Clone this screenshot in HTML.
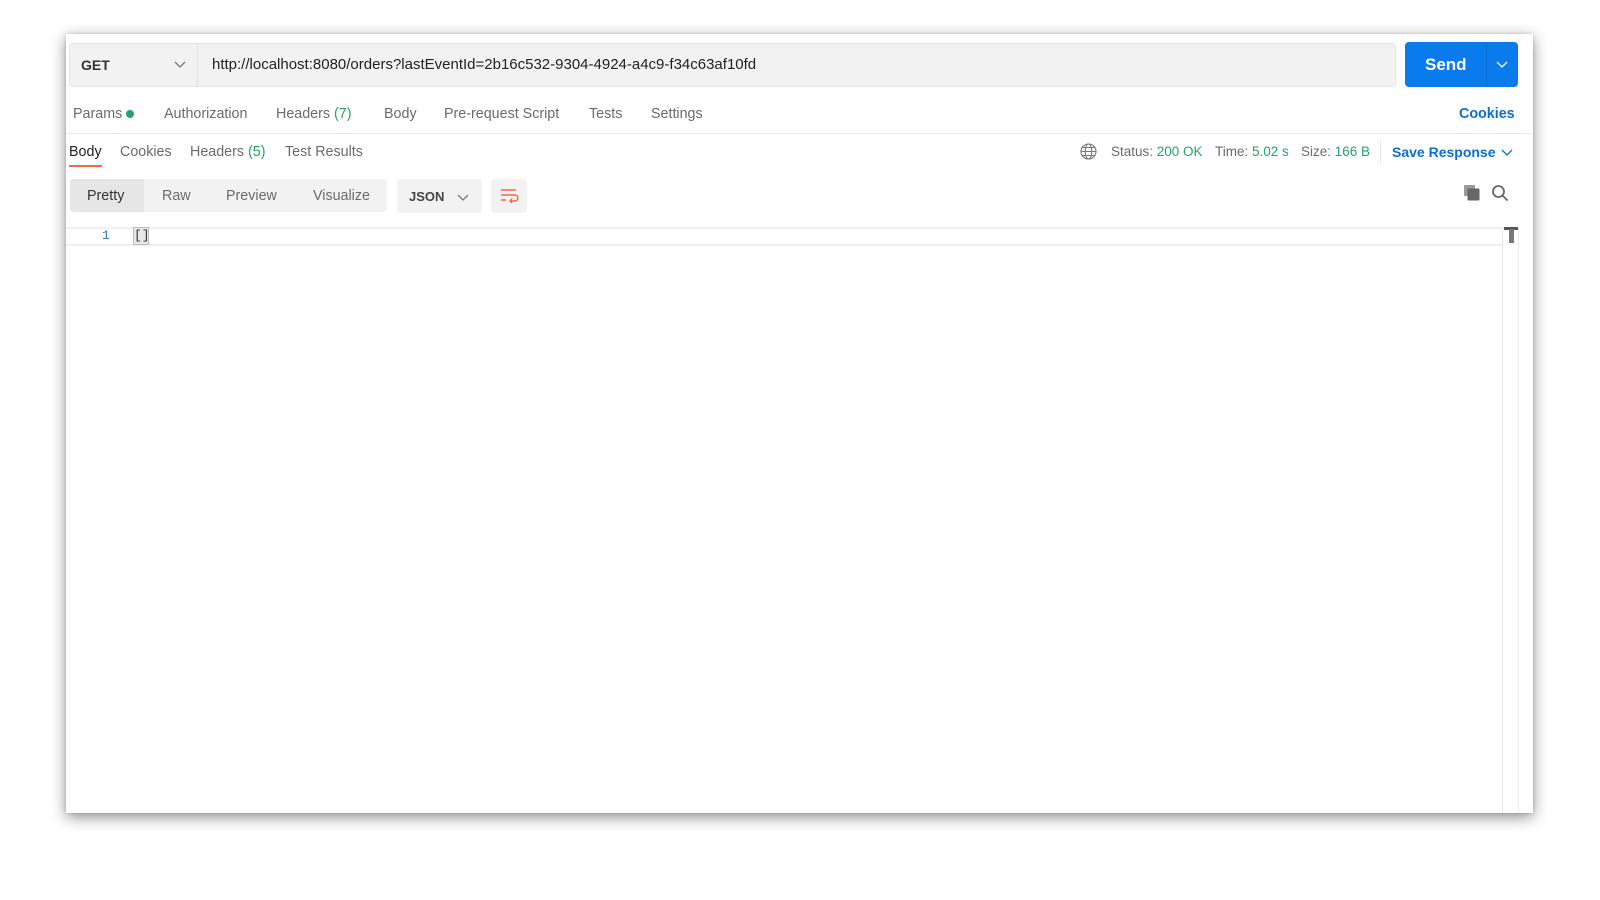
<!DOCTYPE html>
<html><head><meta charset="utf-8"><style>
*{box-sizing:border-box;margin:0;padding:0}
body{width:1600px;height:900px;background:#fff;font-family:"Liberation Sans",sans-serif;position:relative;overflow:hidden;color:#212121}
.win{position:absolute;left:66px;top:34px;width:1467px;height:779px;background:#fff;box-shadow:0 4px 14px rgba(0,0,0,.45),0 0 3px rgba(0,0,0,.15)}
.a{position:absolute;white-space:nowrap}
.g{color:#26a269}
.t{font-size:14.3px;color:#6b6b6b}
</style></head><body>
<div class="win">
 <div class="a" style="left:3px;top:9px;width:1327px;height:44px;background:#f2f2f2;border:1px solid #e4e4e4;border-radius:4px"></div>
 <div class="a" style="left:131px;top:9px;width:1px;height:44px;background:#e0e0e0"></div>
 <div class="a" style="left:15px;top:23px;font-size:14px;font-weight:bold;color:#333">GET</div>
 <svg class="a" style="left:108px;top:25px" width="12" height="10"><path d="M1 3l5 5 5-5" stroke="#777" fill="none" stroke-width="1.3"/></svg>
 <div class="a" style="left:146px;top:22px;font-size:15px;color:#222">http://localhost:8080/orders?lastEventId=2b16c532-9304-4924-a4c9-f34c63af10fd</div>
 <div class="a" style="left:1339px;top:8px;width:113px;height:45px;background:#097bed;border-radius:4px"></div>
 <div class="a" style="left:1420px;top:8px;width:1px;height:45px;background:#0a6fd6"></div>
 <div class="a" style="left:1359px;top:21px;font-size:17px;font-weight:bold;color:#fff">Send</div>
 <svg class="a" style="left:1430px;top:25px" width="12" height="10"><path d="M1 3l5 5 5-5" stroke="#fff" fill="none" stroke-width="1.3"/></svg>

 <div class="a t" style="left:7px;top:72px">Params</div>
 <div class="a" style="left:60px;top:76px;width:8px;height:8px;border-radius:50%;background:#26a269"></div>
 <div class="a t" style="left:98px;top:72px">Authorization</div>
 <div class="a t" style="left:210px;top:72px">Headers <span class="g">(7)</span></div>
 <div class="a t" style="left:318px;top:72px">Body</div>
 <div class="a t" style="left:378px;top:72px">Pre-request Script</div>
 <div class="a t" style="left:523px;top:72px">Tests</div>
 <div class="a t" style="left:585px;top:72px">Settings</div>
 <div class="a" style="left:1393px;top:72px;font-size:14.3px;font-weight:bold;color:#0b6fd0">Cookies</div>
 <div class="a" style="left:0;top:99px;width:1467px;height:1px;background:#ebebeb"></div>

 <div class="a" style="left:3px;top:110px;font-size:14.3px;color:#222">Body</div>
 <div class="a" style="left:3px;top:131px;width:33px;height:2px;background:#f26b3a"></div>
 <div class="a t" style="left:54px;top:110px">Cookies</div>
 <div class="a t" style="left:124px;top:110px">Headers <span class="g">(5)</span></div>
 <div class="a t" style="left:219px;top:110px">Test Results</div>
 <svg class="a" style="left:1014px;top:109px" width="17" height="17" fill="none" stroke="#777" stroke-width="1.1"><circle cx="8.5" cy="8.5" r="7.5"/><ellipse cx="8.5" cy="8.5" rx="3.3" ry="7.5"/><path d="M1 8.5h15M2.5 4.5h12M2.5 12.5h12"/></svg>
 <div class="a t" style="left:1045px;top:110px;font-size:13.5px">Status: <span class="g">200 OK</span></div>
 <div class="a t" style="left:1149px;top:110px;font-size:13.5px">Time: <span class="g">5.02 s</span></div>
 <div class="a t" style="left:1235px;top:110px;font-size:13.5px">Size: <span class="g">166 B</span></div>
 <div class="a" style="left:1314px;top:106px;width:1px;height:24px;background:#e6e6e6"></div>
 <div class="a" style="left:1326px;top:110px;font-size:14px;font-weight:bold;color:#0b6fd0">Save Response</div>
 <svg class="a" style="left:1435px;top:113px" width="12" height="10"><path d="M1 3l5 5 5-5" stroke="#0b6fd0" fill="none" stroke-width="1.3"/></svg>

 <div class="a" style="left:4px;top:145px;width:317px;height:33px;background:#f2f2f2;border-radius:4px"></div>
 <div class="a" style="left:4px;top:145px;width:74px;height:33px;background:#e6e6e6;border-radius:4px 0 0 4px"></div>
 <div class="a" style="left:21px;top:154px;font-size:14.3px;color:#333">Pretty</div>
 <div class="a t" style="left:96px;top:154px">Raw</div>
 <div class="a t" style="left:160px;top:154px">Preview</div>
 <div class="a t" style="left:247px;top:154px">Visualize</div>
 <div class="a" style="left:331px;top:145px;width:85px;height:34px;background:#f2f2f2;border-radius:4px"></div>
 <div class="a" style="left:343px;top:155px;font-size:13px;font-weight:bold;color:#444">JSON</div>
 <svg class="a" style="left:391px;top:158px" width="12" height="10"><path d="M1 3l5 5 5-5" stroke="#777" fill="none" stroke-width="1.3"/></svg>
 <div class="a" style="left:425px;top:145px;width:36px;height:34px;background:#f2f2f2;border-radius:4px"></div>
 <svg class="a" style="left:433px;top:153px" width="20" height="18" fill="none" stroke="#f26b3a" stroke-width="1.4"><path d="M2 3h15M2 8h14a3 3 0 0 1 0 6h-5M13 11.5l-2 2.5 2 2M2 13h5"/></svg>
 <svg class="a" style="left:1397px;top:150px" width="18" height="18"><rect x="1" y="1" width="11" height="11" rx="1" fill="#999"/><rect x="4.5" y="4.5" width="12" height="12" rx="1" fill="#666"/></svg>
 <svg class="a" style="left:1425px;top:150px" width="18" height="18" fill="none" stroke="#666" stroke-width="1.8"><circle cx="7.5" cy="7.5" r="5.5"/><path d="M11.5 11.5l5 5"/></svg>

 <div class="a" style="left:0;top:193px;width:1436px;height:19px;border-top:2px solid #f0f0f0;border-bottom:2px solid #f0f0f0"></div>
 <div class="a" style="left:36px;top:194px;font-size:13px;color:#2d7bb0;font-family:'Liberation Mono',monospace">1</div>
 <div class="a" style="left:67px;top:193px;width:16px;height:18px;background:#e8e8e8;border:1px solid #bbb;font-size:13px;font-family:'Liberation Mono',monospace;text-align:center;line-height:16px;color:#333">[]</div>
 <div class="a" style="left:1436px;top:193px;width:1px;height:586px;background:#e6e6e6"></div>
 <div class="a" style="left:1452px;top:193px;width:1px;height:586px;background:#ececec"></div>
 <div class="a" style="left:1438px;top:193px;width:14px;height:3px;background:#555"></div>
 <div class="a" style="left:1443px;top:195px;width:5px;height:14px;background:#777"></div>
</div>
</body></html>
